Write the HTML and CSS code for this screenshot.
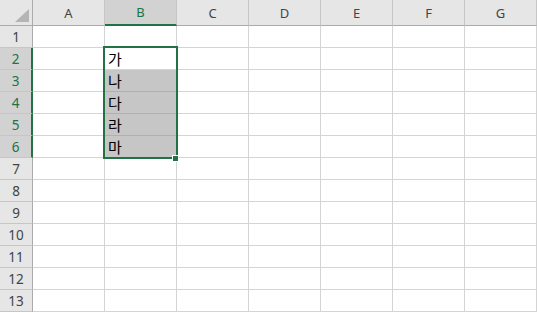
FILE: index.html
```html
<!DOCTYPE html>
<html lang="ko">
<head>
    <meta charset="UTF-8">
    <title>Sheet1</title>
    <link rel="stylesheet" href="styles.css">
</head>
<body>
    <div class="sheet">
        <div class="corner">
            <svg width="33" height="26" viewBox="0 0 33 26"><polygon points="15,22 29,22 29,9" fill="#b4b4b4"/></svg>
        </div>
        <div class="colhead">A</div>
        <div class="colhead sel">B</div>
        <div class="colhead">C</div>
        <div class="colhead">D</div>
        <div class="colhead">E</div>
        <div class="colhead">F</div>
        <div class="colhead">G</div>

        <div class="rowhead">1</div>
        <div class="cell"></div><div class="cell"></div><div class="cell"></div><div class="cell"></div><div class="cell"></div><div class="cell"></div><div class="cell"></div>

        <div class="rowhead sel">2</div>
        <div class="cell"></div><div class="cell">가</div><div class="cell"></div><div class="cell"></div><div class="cell"></div><div class="cell"></div><div class="cell"></div>

        <div class="rowhead sel">3</div>
        <div class="cell"></div><div class="cell hl">나</div><div class="cell"></div><div class="cell"></div><div class="cell"></div><div class="cell"></div><div class="cell"></div>

        <div class="rowhead sel">4</div>
        <div class="cell"></div><div class="cell hl">다</div><div class="cell"></div><div class="cell"></div><div class="cell"></div><div class="cell"></div><div class="cell"></div>

        <div class="rowhead sel">5</div>
        <div class="cell"></div><div class="cell hl">라</div><div class="cell"></div><div class="cell"></div><div class="cell"></div><div class="cell"></div><div class="cell"></div>

        <div class="rowhead sel">6</div>
        <div class="cell"></div><div class="cell hl">마</div><div class="cell"></div><div class="cell"></div><div class="cell"></div><div class="cell"></div><div class="cell"></div>

        <div class="rowhead">7</div>
        <div class="cell"></div><div class="cell"></div><div class="cell"></div><div class="cell"></div><div class="cell"></div><div class="cell"></div><div class="cell"></div>

        <div class="rowhead">8</div>
        <div class="cell"></div><div class="cell"></div><div class="cell"></div><div class="cell"></div><div class="cell"></div><div class="cell"></div><div class="cell"></div>

        <div class="rowhead">9</div>
        <div class="cell"></div><div class="cell"></div><div class="cell"></div><div class="cell"></div><div class="cell"></div><div class="cell"></div><div class="cell"></div>

        <div class="rowhead">10</div>
        <div class="cell"></div><div class="cell"></div><div class="cell"></div><div class="cell"></div><div class="cell"></div><div class="cell"></div><div class="cell"></div>

        <div class="rowhead">11</div>
        <div class="cell"></div><div class="cell"></div><div class="cell"></div><div class="cell"></div><div class="cell"></div><div class="cell"></div><div class="cell"></div>

        <div class="rowhead">12</div>
        <div class="cell"></div><div class="cell"></div><div class="cell"></div><div class="cell"></div><div class="cell"></div><div class="cell"></div><div class="cell"></div>

        <div class="rowhead">13</div>
        <div class="cell"></div><div class="cell"></div><div class="cell"></div><div class="cell"></div><div class="cell"></div><div class="cell"></div><div class="cell"></div>

        <!-- selection outline for B2:B6 -->
        <div class="selection"></div>
        <div class="handle"></div>
    </div>
</body>
</html>
```

FILE: styles.css
```css
body {
    margin: 0;
    background: #ffffff;
    font-family: "Noto Sans", "Noto Sans CJK KR", sans-serif;
}
.sheet {
    position: relative;
    display: grid;
    grid-template-columns: 33px repeat(7, 72px);
    grid-template-rows: 26px repeat(13, 22px);
    width: 537px;
}
.corner,
.colhead,
.rowhead,
.cell {
    box-sizing: border-box;
    border-right: 1px solid #d4d4d4;
    border-bottom: 1px solid #d4d4d4;
}
.corner {
    background: #e6e6e6;
    border-right-color: #ababab;
    border-bottom-color: #ababab;
}
.corner svg {
    display: block;
}
.colhead {
    background: #e6e6e6;
    border-right-color: #c6c6c6;
    border-bottom-color: #ababab;
    color: #444444;
    font-size: 13px;
    display: flex;
    align-items: center;
    justify-content: center;
}
.colhead.sel {
    background: #d2d2d2;
    color: #217346;
    border-bottom: 2px solid #217346;
}
.rowhead {
    background: #e6e6e6;
    border-right-color: #ababab;
    border-bottom-color: #c6c6c6;
    color: #444444;
    font-size: 13.5px;
    display: flex;
    align-items: center;
    justify-content: center;
}
.rowhead.sel {
    background: #d2d2d2;
    color: #217346;
    border-right: 2px solid #217346;
}
.cell {
    font-family: "Noto Sans CJK KR", sans-serif;
    font-size: 15px;
    line-height: 21px;
    padding-left: 3px;
    color: #000000;
}
.cell.hl {
    background: #c6c6c6;
    border-bottom-color: #b0b0b0;
}
.selection {
    position: absolute;
    left: 103px;
    top: 46px;
    width: 75px;
    height: 113px;
    box-sizing: border-box;
    border: 2px solid #217346;
    pointer-events: none;
}
.handle {
    position: absolute;
    left: 172px;
    top: 155px;
    width: 5px;
    height: 5px;
    background: #217346;
    border: 1px solid #ffffff;
}
```
